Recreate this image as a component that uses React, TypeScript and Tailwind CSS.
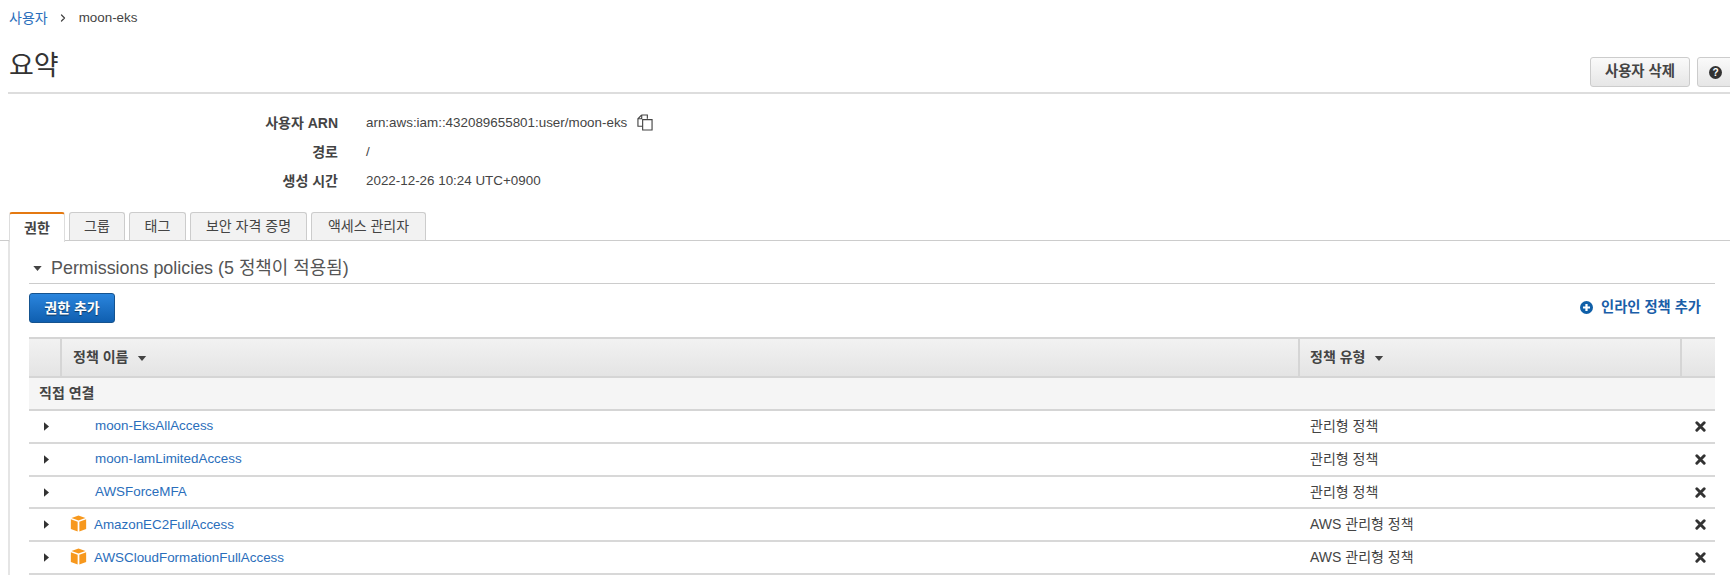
import { ChevronRight } from "lucide-react";

const font = "font-['Liberation_Sans','Noto_Sans_CJK_KR',sans-serif]";

const tabs = [
  { label: "권한", width: "w-[56px]", active: true },
  { label: "그룹", width: "w-[56px]" },
  { label: "태그", width: "w-[57px]" },
  { label: "보안 자격 증명", width: "w-[117px]" },
  { label: "액세스 관리자", width: "w-[115px]" },
];

const policies = [
  { name: "moon-EksAllAccess", type: "관리형 정책", h: "h-[33px]" },
  { name: "moon-IamLimitedAccess", type: "관리형 정책", h: "h-[33px]" },
  { name: "AWSForceMFA", type: "관리형 정책", h: "h-[32px]" },
  { name: "AmazonEC2FullAccess", type: "AWS 관리형 정책", aws: true, h: "h-[33px]" },
  { name: "AWSCloudFormationFullAccess", type: "AWS 관리형 정책", aws: true, h: "h-[33px]" },
];

function Caret({ className }: { className?: string }) {
  return (
    <svg viewBox="0 0 10 6" className={className}>
      <path d="M0 0h10L5 6z" fill="#444" />
    </svg>
  );
}

function CubeIcon() {
  return (
    <svg viewBox="0 0 16 16" className="mb-[3px] w-[17px] h-[17px]">
      <path d="M8 .5l6.6 2.3L8 5.2 1.4 2.8z" fill="#f7981d" />
      <path d="M.8 4l6.4 2.4V15.6L.8 13.2z" fill="#f7981d" />
      <path d="M15.2 4L8.8 6.4V15.6l6.4-2.4z" fill="#f7981d" />
    </svg>
  );
}

function InfoRow({ label, h, children }: { label: string; h: string; children: React.ReactNode }) {
  return (
    <div className={`flex ${h} items-center`}>
      <div className="w-[338px] text-right text-[14px] font-bold text-[#444]">{label}</div>
      <div className="ml-[28px] flex items-center text-[13.4px] text-[#444]">{children}</div>
    </div>
  );
}

export default function App() {
  return (
    <div className={`${font} w-[1730px] h-[582px] overflow-hidden bg-white text-[#444]`}>
      {/* breadcrumb */}
      <div className="flex h-[36px] items-center pl-[9px] text-[13.4px]">
        <a className="text-[14px] text-[#2a6ebb]">사용자</a>
        <ChevronRight strokeWidth={2.5} className="ml-[9px] mr-[8px] w-[12px] h-[12px] text-[#444]" />
        <span className="ml-[2px]">moon-eks</span>
      </div>

      {/* title */}
      <div className="ml-[8px] flex h-[58px] items-start justify-between border-b-2 border-[#ddd] overflow-hidden">
        <h1 className="pt-[12px] pl-[1px] text-[27px] leading-[36px] text-[#333]">요약</h1>
        <div className="mt-[21px] flex gap-[7px] -mr-[20px]">
          <button className="h-[30px] w-[100px] rounded-[3px] border border-[#ccc] bg-gradient-to-b from-[#fafafa] to-[#e6e6e6] text-[14.4px] font-bold text-[#444]">
            사용자 삭제
          </button>
          <button className="flex h-[30px] w-[53px] items-center pl-[11px] rounded-[3px] border border-[#ccc] bg-gradient-to-b from-[#fafafa] to-[#e6e6e6]">
            <svg viewBox="0 0 14 14" className="w-[13px] h-[13px]">
              <circle cx="7" cy="7" r="7" fill="#333" />
              <text x="7" y="11" textAnchor="middle" fontSize="11" fontWeight="bold" fill="#fff">?</text>
            </svg>
          </button>
        </div>
      </div>

      {/* summary */}
      <div className="mt-[14px]">
        <InfoRow label="사용자 ARN" h="h-[30px]">
          arn:aws:iam::432089655801:user/moon-eks
          <svg viewBox="0 0 17 18" className="ml-[10px] w-[16px] h-[17px]" fill="none" stroke="#444" strokeWidth="1.2">
            <path d="M5 1h6v4" />
            <path d="M5 1L1 5v8h5" />
            <path d="M5 1v4H1" />
            <path d="M6 6h10v11H6z" />
          </svg>
        </InfoRow>
        <InfoRow label="경로" h="h-[29px]">/</InfoRow>
        <InfoRow label="생성 시간" h="h-[29px]">2022-12-26 10:24 UTC+0900</InfoRow>
      </div>

      {/* tabs */}
      <div className="mt-[16px] flex h-[29px] gap-[4px] pl-[9px] border-b border-[#ccc]">
        {tabs.map((t) => (
          <div
            key={t.label}
            className={`flex ${t.width} items-center justify-center rounded-t-[3px] border border-b-0 text-[14px] ${
              t.active
                ? "border-[#ddd] border-t-2 border-t-[#e47911] bg-white font-bold h-[30px] relative z-10"
                : "h-[28px] border-[#ccc] bg-[#f2f2f2] text-[#444]"
            }`}
          >
            {t.label}
          </div>
        ))}
      </div>

      {/* pane */}
      <div className="ml-[8px] border-l-2 border-[#e5e5e5] pl-[19px] pr-[15px]">
        <div className="flex h-[43px] items-center border-b border-[#ccc] pt-[12px]">
          <Caret className="ml-[4px] w-[9px] h-[5px]" />
          <span className="ml-[9px] text-[17.9px] text-[#555]">Permissions policies (5 정책이 적용됨)</span>
        </div>

        <div className="mt-[9px] flex items-start justify-between">
          <button className="h-[30px] w-[86px] rounded-[3px] border border-[#15538f] bg-gradient-to-b from-[#2a85dd] to-[#0f5fb0] text-[14px] font-bold text-white [text-shadow:0_1px_1px_rgba(0,0,0,.5)]">
            권한 추가
          </button>
          <a className="mr-[14px] mt-[4px] flex items-center text-[14.3px] font-bold text-[#1a5ea8]">
            <svg viewBox="0 0 14 14" className="mr-[8px] w-[13px] h-[13px]">
              <circle cx="7" cy="7" r="7" fill="#0f5fa8" />
              <path d="M3.2 7h7.6M7 3.2v7.6" stroke="#fff" strokeWidth="2.4" />
            </svg>
            인라인 정책 추가
          </a>
        </div>

        {/* table */}
        <div className="mt-[14px] text-[14px]">
          <div className="flex h-[41px] border-y-2 border-[#d5d5d5] bg-gradient-to-b from-[#f2f2f2] to-[#e4e4e4] font-bold">
            <div className="w-[33px] border-r-2 border-[#d5d5d5]" />
            <div className="flex w-[1238px] items-center border-r-2 border-[#d5d5d5] pl-[11px] pb-[1px]">
              정책 이름
              <Caret className="ml-[9px] mt-[3px] w-[10px] h-[5px]" />
            </div>
            <div className="flex w-[382px] items-center border-r-2 border-[#d5d5d5] pl-[10px] pb-[1px]">
              정책 유형
              <Caret className="ml-[9px] mt-[3px] w-[10px] h-[5px]" />
            </div>
            <div className="flex-1" />
          </div>
          <div className="flex h-[33px] items-center border-b-2 border-[#d5d5d5] bg-[#f5f5f5] pl-[10px] font-bold">
            직접 연결
          </div>
          {policies.map((p) => (
            <div key={p.name} className={`flex ${p.h} items-center border-b-2 border-[#d8d8d8]`}>
              <div className="flex w-[33px] justify-center pl-[1px]">
                <svg viewBox="0 0 6 10" className="w-[5px] h-[9px]">
                  <path d="M0 0l6 5-6 5z" fill="#333" />
                </svg>
              </div>
              <div className="flex w-[33px] justify-start pl-[8px]">{p.aws && <CubeIcon />}</div>
              <div className={`w-[1205px] text-[13.4px] text-[#2a6ebb] ${p.aws ? "-ml-[1px] mr-[1px] pt-[2px]" : ""}`}>{p.name}</div>
              <div className="flex-1 pl-[10px]">{p.type}</div>
              <svg viewBox="0 0 12 12" className="mr-[9px] w-[11px] h-[11px]">
                <path d="M2 2l8 8M10 2l-8 8" stroke="#333" strokeWidth="3.2" strokeLinecap="round" />
              </svg>
            </div>
          ))}
        </div>
      </div>
    </div>
  );
}
